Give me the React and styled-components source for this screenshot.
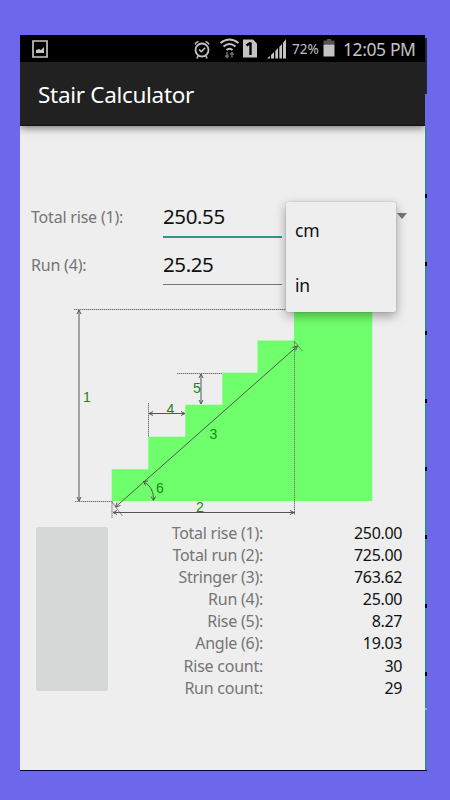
import React from 'react';
import styled, { createGlobalStyle } from 'styled-components';

const GlobalStyle = createGlobalStyle`
  * { box-sizing: border-box; }
  body { margin: 0; background: #6d67ec; font-family: "Noto Sans", sans-serif; }
`;

const Page = styled.div`
  width: 450px;
  height: 800px;
  padding: 35px 0 0 20px;
  background: #6d67ec;
  overflow: hidden;
  display: flex;
  align-items: flex-start;
`;

const Phone = styled.main`
  width: 405px;
  height: 736px;
  background: #eeeeee;
  border-bottom: 1px solid #05053c;
  display: flex;
  flex-direction: column;
`;

const EdgeStrip = styled.div`
  width: 2px;
  height: 736px;
  padding-top: 3px;
  display: flex;
  flex-direction: column;
`;

const EdgeDark = styled.div`
  height: 56px;
  margin-bottom: 34px;
  background: #242428;
`;

const EdgeTeal = styled.div`
  flex: 1;
  padding-top: 66px;
  background: linear-gradient(90deg, #2f8694, #4c849f);
  border-bottom: 1px solid #05053c;
  display: flex;
  flex-direction: column;
  gap: 64.3px;
`;

const EdgeMark = styled.div`
  height: 4px;
  flex: none;
  background: #000;
`;

const EdgeDivider = styled.div`
  height: 2px;
  flex: none;
  margin-top: -32px;
  background: #9fa6c4;
`;

const StatusBar = styled.div`
  height: 27px;
  background: #000;
  color: #c3c3c3;
  display: flex;
  align-items: center;
`;

const StatusIcons = styled.svg`
  display: block;
  width: 272px;
  height: 27px;
  flex: none;
`;

const BatteryText = styled.span`
  width: 31px;
  font-size: 13.5px;
  line-height: 27px;
  padding-top: 1px;
`;

const BatteryIcon = styled.svg`
  display: block;
  width: 12px;
  height: 27px;
`;

const Clock = styled.span`
  margin-left: 8px;
  font-size: 17.5px;
  letter-spacing: -0.4px;
  line-height: 27px;
  white-space: nowrap;
  padding-top: 1px;
`;

const AppBar = styled.header`
  height: 64px;
  padding: 2px 0 0 18px;
  background: #212121;
  border-bottom: 1px solid #111;
  box-shadow: 0 2px 8px rgba(0, 0, 0, 0.5);
  clip-path: inset(0 0 -20px 0);
  color: #fff;
  display: flex;
  align-items: center;
`;

const Title = styled.h1`
  margin: 0;
  font-size: 22.5px;
  letter-spacing: -0.3px;
  font-weight: 400;
  white-space: nowrap;
`;

const Form = styled.section`
  position: relative;
  margin-top: 66px;
  height: 108px;
  padding-left: 11px;
`;

const Field = styled.label`
  height: ${(p) => p.$height}px;
  display: flex;
  align-items: stretch;
`;

const FieldLabel = styled.span`
  width: 132px;
  padding-top: ${(p) => p.$top}px;
  font-size: 16px;
  line-height: 22px;
  letter-spacing: -0.2px;
  color: #757575;
`;

const Input = styled.input`
  width: 119px;
  padding: ${(p) => (p.$active ? 4 : 5)}px 0 0;
  border: 0;
  border-bottom: ${(p) => (p.$active ? '2px solid #309688' : '1px solid #777')};
  border-radius: 0;
  outline: none;
  background: transparent;
  color: #111;
  font: 20.5px/28px "Noto Sans", sans-serif;
  letter-spacing: -0.4px;
`;

const Caret = styled.svg`
  width: 10px;
  height: 6px;
  margin: 21px 0 0 115px;
`;

const UnitMenu = styled.ul`
  position: absolute;
  z-index: 2;
  left: 266px;
  top: 10px;
  width: 110px;
  height: 110px;
  margin: 0;
  padding: 0;
  list-style: none;
  background: #eeeeee;
  border-radius: 2px;
  box-shadow: 0 4px 11px rgba(0, 0, 0, 0.34), 0 0 2px rgba(0, 0, 0, 0.2);
`;

const UnitOption = styled.li`
  height: 55px;
  padding-left: 9px;
  color: #111;
  font-size: 17.5px;
  letter-spacing: -0.2px;
  line-height: 56px;
`;

const Diagram = styled.svg`
  display: block;
  width: 405px;
  height: 221px;
  font-family: "Liberation Sans", sans-serif;
  font-size: 14px;
`;

const Results = styled.section`
  display: flex;
  padding: 6px 23px 0 16px;
`;

const ActionButton = styled.button`
  width: 72px;
  height: 164px;
  border: 0;
  border-radius: 2px;
  background: #d6d8d7;
`;

const ResultTable = styled.dl`
  flex: 1;
  margin: -5.5px 0 0;
  display: grid;
  grid-template-columns: 155px 1fr;
  grid-auto-rows: 22.2px;
  text-align: right;
  font-size: 16px;
  line-height: 22px;
  white-space: nowrap;
`;

const ResultName = styled.dt`
  color: #757575;
  letter-spacing: -0.25px;
`;

const ResultValue = styled.dd`
  margin: 0;
  color: #111;
  letter-spacing: -0.35px;
`;

const results = [
  ['Total rise (1):', '250.00'],
  ['Total run (2):', '725.00'],
  ['Stringer (3):', '763.62'],
  ['Run (4):', '25.00'],
  ['Rise (5):', '8.27'],
  ['Angle (6):', '19.03'],
  ['Rise count:', '30'],
  ['Run count:', '29'],
];

const marks = [0, 1, 2, 3, 4, 5, 6, 7];

function StatusGlyphs() {
  return (
    <StatusIcons viewBox="20 35 272 27" fill="none" stroke="#c3c3c3">
      <path d="M33 41h14v16H33z" strokeWidth="1.700" />
      <path d="M36 53v-3l3-1 2 1 3-3v6z" fill="#c3c3c3" stroke="none" />
      <circle cx="202" cy="50" r="6.5" strokeWidth="1.8" />
      <path d="M199 49.5l2.3 2.2 3.8-4M195 44.5q1-2.500 3.500-3M209 44.500q-1-2.500-3.500-3M198 56l-1 2.500M206 56l1 2.500" strokeWidth="1.6" />
      <path d="M220.500 43q9-7 18 0M223.500 46.500q6-5 12 0M226.500 50q3-2.500 6 0" strokeWidth="2" />
      <path d="M227 52v5.500M225.300 55.500l1.700 2 1.700-2M232 57.500v-5M230.300 54.500l1.700-2 1.700 2" stroke="#707070" strokeWidth="1.4" />
      <path d="M243 39.500h10l4 4V57.500h-14z" fill="#c3c3c3" stroke="none" />
      <path d="M246.500 45.500l3-2h1V55" stroke="#000" strokeWidth="2.4" />
      <path d="M267 58.500l3-2.500V58.500zM271 55l3-3v6.500h-3zM275.300 51l2.700-3v10.500h-2.700zM279.300 47l2.700-3v14.500h-2.700zM283 43l3-4v19.500h-3z" fill="#c3c3c3" stroke="none" />
    </StatusIcons>
  );
}

function StairDiagram() {
  return (
    <Diagram viewBox="20 300 405 221" fill="none">
      <path d="M111.700 501V469.200H148.300V436.800H185.300V404.800H222.300V372.700H257.500V340.500H294V309H372.300V501z" fill="#70ff6c" />
      <g stroke="#777" strokeWidth="1" strokeDasharray="1.500 .5">
        <path d="M74 309.500H294M75 501.500H112M148.500 403V437M177 373.500H222M112 501V518M294.500 341V515" />
      </g>
      <g stroke="#555" strokeWidth="1">
        <path d="M79 310V501M77 314l2-4 2 4M77 497l2 4 2-4" />
        <path d="M149 413.500H185M153 411.500l-4 2 4 2M181 411.500l4 2-4 2" />
        <path d="M201 374V404M199 378l2-4 2 4M199 400l2 4 2-4" />
        <path d="M113 512.500H295M117 510.500l-4 2 4 2M290 510.500l4 2-4 2" />
        <path d="M115.500 507L297.500 346M117 502.500l-1.500 4.500 5-1.500M292.500 347.500l5-1.500-2 4.500" />
        <path d="M143.500 481.500Q154 487 153.500 500M148 481l-4.500.5 2 4M151 496.500l2.500 4 2-4" />
        <path d="M294 341l8.500 10M112 502l10.500 14" strokeOpacity=".65" />
      </g>
      <g fill="#138a13">
        <text x="83" y="402">1</text>
        <text x="196" y="512">2</text>
        <text x="209.500" y="439">3</text>
        <text x="166.500" y="414">4</text>
        <text x="193" y="393">5</text>
        <text x="156" y="493">6</text>
      </g>
    </Diagram>
  );
}

export default function App() {
  return (
    <Page>
      <GlobalStyle />
      <Phone>
        <StatusBar>
          <StatusGlyphs />
          <BatteryText>72%</BatteryText>
          <BatteryIcon viewBox="0 0 12 27">
            <path d="M4 4h4v1.500h3.500V9.500H.5V5.500H4z" fill="#555" />
            <path d="M.5 9.500h11V21.500H.5z" fill="#c3c3c3" />
          </BatteryIcon>
          <Clock>12:05 PM</Clock>
        </StatusBar>
        <AppBar>
          <Title>Stair Calculator</Title>
        </AppBar>
        <Form>
          <Field $height={46}>
            <FieldLabel $top={14}>Total rise (1):</FieldLabel>
            <Input $active defaultValue="250.55" />
            <Caret viewBox="0 0 10 6">
              <path d="M0 0h10L5 6z" fill="#757575" />
            </Caret>
          </Field>
          <Field $height={47}>
            <FieldLabel $top={16}>Run (4):</FieldLabel>
            <Input defaultValue="25.25" />
          </Field>
          <UnitMenu>
            <UnitOption>cm</UnitOption>
            <UnitOption>in</UnitOption>
          </UnitMenu>
        </Form>
        <StairDiagram />
        <Results>
          <ActionButton aria-label="Calculate" />
          <ResultTable>
            {results.map(([name, value]) => (
              <React.Fragment key={name}>
                <ResultName>{name}</ResultName>
                <ResultValue>{value}</ResultValue>
              </React.Fragment>
            ))}
          </ResultTable>
        </Results>
      </Phone>
      <EdgeStrip>
        <EdgeDark />
        <EdgeTeal>
          {marks.map((m) => (
            <EdgeMark key={m} />
          ))}
          <EdgeDivider />
        </EdgeTeal>
      </EdgeStrip>
    </Page>
  );
}
